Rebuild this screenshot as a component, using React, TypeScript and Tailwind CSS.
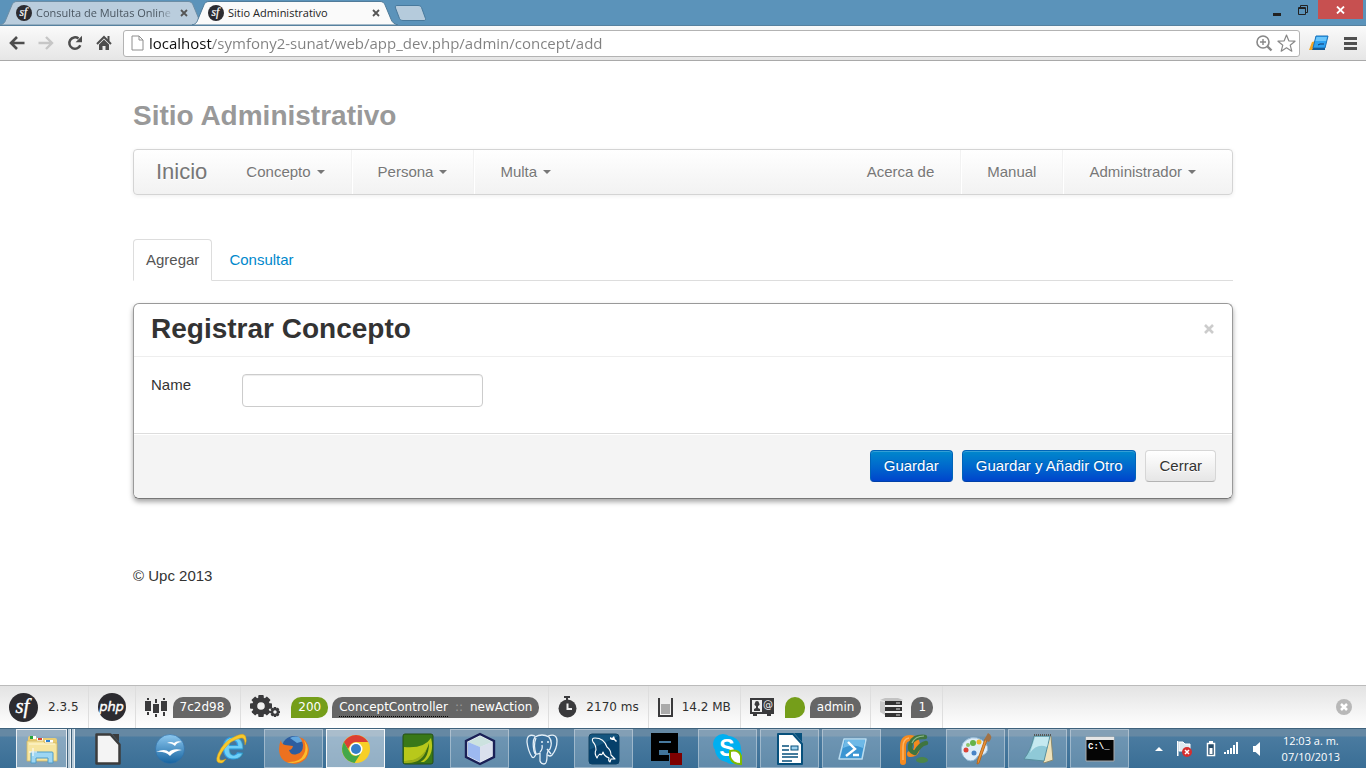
import React from "react";

function SymfonyMark({ size }: { size: number }) {
  return (
    <svg width={size} height={size} viewBox="0 0 28 28" aria-hidden="true" className="shrink-0">
      <circle cx="14" cy="14" r="14" fill="#2c2b30" />
      <text x="13" y="19" textAnchor="middle" fontFamily="Liberation Serif, serif" fontStyle="italic" fontSize="20" fill="#fff" stroke="#fff" strokeWidth=".4">sf</text>
    </svg>
  );
}

function TabShape({ fill, stroke }: { fill: string; stroke: string }) {
  return (
    <svg viewBox="0 0 206 25" preserveAspectRatio="none" className="absolute inset-0 h-full w-full" aria-hidden="true">
      <path d="M0 25 C4 24 5 22 6 19 L12 4 C13 2 14 .5 17 .5 L188 .5 C191 .5 192 2 193 4 L199 19 C200 22 202 24 206 25 Z" fill={fill} stroke={stroke} />
    </svg>
  );
}

function BrowserTab({ title, active }: { title: string; active?: boolean }) {
  return (
    <div className={active ? "relative z-10 -ml-[14px] flex h-6 w-[206px] items-center px-4" : "relative flex h-6 w-[206px] items-center px-4"}>
      {active ? <TabShape fill="#fafafa" stroke="#4d7896" /> : <TabShape fill="#bacddd" stroke="#6b8ba3" />}
      <div className="relative flex min-w-0 flex-1 items-center">
        <SymfonyMark size={16} />
        <span className={active ? "ml-1 flex-1 overflow-hidden text-[11px] leading-4 whitespace-nowrap text-[#222]" : "ml-1 flex-1 overflow-hidden text-[11px] leading-4 whitespace-nowrap text-[#4a5661] [mask-image:linear-gradient(90deg,#000_88%,transparent)]"}>{title}</span>
        <button type="button" aria-label={"Cerrar pestaña " + title} className="ml-1 flex size-3 items-center justify-center">
          <svg width="8" height="8" viewBox="0 0 8 8"><path d="M1 1l6 6M7 1l-6 6" stroke="#555" strokeWidth="1.8" /></svg>
        </button>
      </div>
    </div>
  );
}

function TitleBar() {
  return (
    <div className="flex h-[25px] items-end justify-between bg-[#5b93ba]">
      <div className="flex items-end">
        <BrowserTab title="Consulta de Multas Online" />
        <BrowserTab title="Sitio Administrativo" active />
        <button type="button" aria-label="Nueva pestaña" className="mb-[4px] -ml-1">
          <svg width="32" height="16" viewBox="0 0 32 16">
            <path d="M3 .5h21c2 0 3 1 3.500 2l4 11c.4 1-.2 2-1.500 2H9c-2 0-3-1-3.500-2L1.500 3C1 1.500 1.500.5 3 .5z" fill="#b5cbdc" stroke="#48799c" />
          </svg>
        </button>
      </div>
      <div className="mr-[3px] flex self-start">
        <button type="button" aria-label="Minimizar" className="flex h-[19px] w-[26px] items-center justify-center">
          <svg width="10" height="12" viewBox="0 0 10 12"><path d="M1 9h8v3H1z" fill="#222" /></svg>
        </button>
        <button type="button" aria-label="Restaurar" className="mr-[2px] flex h-[19px] w-[26px] items-center justify-center">
          <svg width="10" height="10" viewBox="0 0 10 10"><path d="M2.500 2V.5h7v7H8M.5 2.500h7v7h-7zM.5 3.500h7" fill="none" stroke="#222" /></svg>
        </button>
        <button type="button" aria-label="Cerrar ventana" className="flex h-[19px] w-[45px] items-center justify-center bg-[#c75050]">
          <svg width="9" height="8" viewBox="0 0 9 8"><path d="M1 .5l7 7M8 .5l-7 7" stroke="#fff" strokeWidth="1.8" /></svg>
        </button>
      </div>
    </div>
  );
}

function AddressBar() {
  return (
    <div className="flex h-9 items-center border-t border-b border-t-[#56819f] border-b-[#a9a9a9] bg-linear-to-b from-[#fafafa] to-[#e6e6e6] px-2">
      <div className="ml-px flex items-center gap-[13px]">
        <button type="button" aria-label="Atrás">
          <svg width="16" height="16" viewBox="0 0 16 16"><path d="M15.500 8H2.500M8 2L2 8l6 6" fill="none" stroke="#4d4d4d" strokeWidth="2.600" /></svg>
        </button>
        <button type="button" aria-label="Adelante">
          <svg width="16" height="16" viewBox="0 0 16 16"><path d="M.5 8h13M8 2l6 6-6 6" fill="none" stroke="#c6c6c6" strokeWidth="2.400" /></svg>
        </button>
        <button type="button" aria-label="Recargar">
          <svg width="16" height="16" viewBox="0 0 16 16"><path d="M13.300 10.200A5.700 5.700 0 1 1 11.500 3.500" fill="none" stroke="#4d4d4d" strokeWidth="2.500" /><path d="M15 .8v6.400H8.600z" fill="#4d4d4d" /></svg>
        </button>
        <button type="button" aria-label="Página principal">
          <svg width="16" height="16" viewBox="0 0 16 16"><path d="M1 9l7-7 7 7" fill="none" stroke="#4d4d4d" strokeWidth="2" /><path d="M11.500 1h2v5h-2zM3 9.500l5-5 5 5V15H9.500v-4h-3v4H3z" fill="#4d4d4d" /></svg>
        </button>
      </div>
      <div className="ml-[11px] flex h-[27px] flex-1 items-center gap-1 rounded-[3px] border border-[#b3b3b3] bg-white pr-[3px] pl-[7px]">
        <svg width="13" height="16" viewBox="0 0 13 16" aria-hidden="true"><path d="M1 1h7l4 4v10H1zM8 1v4h4" fill="#fff" stroke="#8e8e8e" /></svg>
        <input
          aria-label="Dirección"
          defaultValue="localhost/symfony2-sunat/web/app_dev.php/admin/concept/add"
          className="ml-px min-w-0 flex-1 bg-[linear-gradient(90deg,#111_63px,#808080_63px)] bg-clip-text text-[15px] leading-6 text-transparent outline-none"
        />
        <button type="button" aria-label="Zoom">
          <svg width="18" height="18" viewBox="0 0 18 18"><circle cx="8" cy="8" r="6" fill="none" stroke="#888" strokeWidth="1.600" /><path d="M5 8h6M8 5v6" stroke="#888" strokeWidth="1.400" /><path d="M12.500 12.500l4 4" stroke="#888" strokeWidth="2.400" /></svg>
        </button>
        <button type="button" aria-label="Marcador">
          <svg width="19" height="18" viewBox="0 0 19 18"><path d="M9.500 1l2.300 5.800 6.200.4-4.800 4 1.600 6-5.300-3.400-5.300 3.400 1.600-6-4.800-4 6.200-.4z" fill="#fff" stroke="#888" strokeWidth="1.200" strokeLinejoin="round" /></svg>
        </button>
      </div>
      <button type="button" aria-label="Extensión" className="ml-[9px]">
        <svg width="20" height="16" viewBox="0 0 20 16">
          <path d="M0 15l3-8 4-1-1 9z" fill="#f5a623" />
          <path d="M7 1h12l-3 12H4z" fill="#2ea2f2" stroke="#1871b8" />
          <path d="M7.500 2h10.500l-1 4H6.500z" fill="#6cc6fb" />
          <path d="M9 10l2-1h4" stroke="#14386a" fill="none" /><path d="M4 13h12v2H3z" fill="#155b96" />
        </svg>
      </button>
      <button type="button" aria-label="Menú" className="ml-[14px]">
        <svg width="15" height="14" viewBox="0 0 15 14"><path d="M1 2.500h13M1 7.500h13M1 12.500h13" stroke="#505050" strokeWidth="3" strokeLinecap="butt" /></svg>
      </button>
    </div>
  );
}

function Caret() {
  return <span aria-hidden="true" className="ml-[6px] border-x-4 border-t-4 border-x-transparent border-t-[#777]" />;
}

function NavItem({ label, caret, divider }: { label: string; caret?: boolean; divider?: boolean }) {
  return (
    <li className={divider ? "flex border-r border-[#f2f2f2] shadow-[1px_0_0_#fff]" : "flex"}>
      <a href="#" className="flex items-center px-[26px] [text-shadow:0_1px_0_#fff]">
        {label}
        {caret && <Caret />}
      </a>
    </li>
  );
}

function SitePage() {
  return (
    <div className="flex-1 bg-white font-['Liberation_Sans',Arial,sans-serif] text-[15px] leading-[22px] text-[#333]">
      <div className="mx-auto max-w-[1100px] pt-[33px]">
        <h1 className="text-[28px] leading-[44px] font-bold text-[#999]">Sitio Administrativo</h1>
        <nav className="mt-[11px] flex h-[46px] rounded-[4px] border border-[#d4d4d4] bg-linear-to-b from-white to-[#f2f2f2] pr-[10px] pl-[22px] text-[#777] shadow-[0_1px_4px_rgba(0,0,0,0.07)]">
          <a href="#" className="flex items-center text-[22px] [text-shadow:0_1px_0_#fff]">Inicio</a>
          <ul className="ml-[13px] flex">
            <NavItem label="Concepto" caret divider />
            <NavItem label="Persona" caret divider />
            <NavItem label="Multa" caret />
          </ul>
          <ul className="ml-auto flex">
            <NavItem label="Acerca de" divider />
            <NavItem label="Manual" divider />
            <NavItem label="Administrador" caret />
          </ul>
        </nav>

        <ul className="mt-11 flex h-[42px] gap-[2px] border-b border-[#ddd]">
          <li className="-mb-px flex">
            <a href="#" className="flex items-center rounded-t-[4px] border border-[#ddd] border-b-white bg-white px-3 text-[#555]">Agregar</a>
          </li>
          <li className="flex">
            <a href="#" className="flex items-center px-[15px] text-[#08c]">Consultar</a>
          </li>
        </ul>

        <section className="mt-[22px] rounded-[6px] border border-[#999] border-b-[#777] shadow-[0_3px_5px_rgba(0,0,0,0.35)]">
          <header className="flex h-[53px] items-center justify-between border-b border-[#eee] pr-4 pb-[3px] pl-[17px]">
            <h2 className="text-[28px] leading-[44px] font-bold">Registrar Concepto</h2>
            <button type="button" aria-label="Cerrar panel" className="flex size-[14px] items-center justify-center">
              <svg width="10" height="10" viewBox="0 0 10 10"><path d="M1 1l8 8M9 1l-8 8" stroke="#ccc" strokeWidth="2.600" /></svg>
            </button>
          </header>
          <form onSubmit={(e: React.FormEvent) => e.preventDefault()}>
            <div className="flex items-start px-[17px] pt-[17px] pb-[26px]">
              <label htmlFor="concept-name" className="w-[91px]">Name</label>
              <input id="concept-name" type="text" className="h-[33px] w-[241px] rounded-[4px] border border-[#ccc] bg-white px-[7px] shadow-[inset_0_1px_1px_rgba(0,0,0,0.075)] outline-none" />
            </div>
            <div className="flex justify-end gap-[9px] rounded-b-[6px] border-t border-[#ddd] bg-[#f4f4f4] p-4 shadow-[inset_0_1px_0_#fff]">
              <button type="submit" className="h-8 rounded-[4px] border border-[#0064b8] border-b-[#0040a8] bg-linear-to-b from-[#0088cc] to-[#0044cc] px-[13px] text-white shadow-[inset_0_1px_0_rgba(255,255,255,0.2)] [text-shadow:0_-1px_0_rgba(0,0,0,0.25)]">Guardar</button>
              <button type="submit" className="h-8 rounded-[4px] border border-[#0064b8] border-b-[#0040a8] bg-linear-to-b from-[#0088cc] to-[#0044cc] px-[13px] text-white shadow-[inset_0_1px_0_rgba(255,255,255,0.2)] [text-shadow:0_-1px_0_rgba(0,0,0,0.25)]">Guardar y Añadir Otro</button>
              <button type="button" className="h-8 rounded-[4px] border border-[#d6d6d6] border-b-[#b3b3b3] bg-linear-to-b from-white to-[#e6e6e6] px-[13px] [text-shadow:0_1px_0_#fff]">Cerrar</button>
            </div>
          </form>
        </section>
        <footer className="mt-[66px]">© Upc 2013</footer>
      </div>
    </div>
  );
}

function Cell({ children }: { children: React.ReactNode }) {
  return <div className="flex h-full items-center border-r border-[#dedede] px-[9px]">{children}</div>;
}

function Pill({ children }: { children: React.ReactNode }) {
  return <span className="flex h-[21px] items-center rounded-[10px] rounded-bl-none bg-[#666] px-[7px] text-white">{children}</span>;
}

const gearTeeth = [0, 45, 90, 135, 180, 225, 270, 315];

function Gear({ x, y, r }: { x: number; y: number; r: number }) {
  return (
    <g transform={`translate(${x} ${y})`} fill="#3a3a3c">
      {gearTeeth.map((a) => (
        <rect key={a} x={-r * 0.25} y={-r} width={r * 0.5} height={r * 0.5} rx={r * 0.08} transform={`rotate(${a})`} />
      ))}
      <circle r={r * 0.57} fill="none" stroke="#3a3a3c" strokeWidth={r * 0.45} />
    </g>
  );
}

function DebugToolbar() {
  return (
    <div className="flex h-[43px] items-center border-t border-[#bbb] bg-linear-to-b from-[#e3e3e3] to-white font-['DejaVu_Sans',Verdana,sans-serif] text-[12px] leading-[21px] text-[#2f2f2f]">
      <Cell>
        <SymfonyMark size={29} />
        <span className="ml-[10px]">2.3.5</span>
      </Cell>
      <Cell>
        <svg width="28" height="28" viewBox="0 0 28 28" aria-hidden="true"><circle cx="14" cy="14" r="14" fill="#2c2b30" /><text x="13.500" y="18" textAnchor="middle" fontFamily="DejaVu Sans, sans-serif" fontStyle="italic" fontSize="13" stroke="#fff" strokeWidth=".4" fill="#fff">php</text></svg>
      </Cell>
      <Cell>
        <svg width="23" height="20" viewBox="0 0 23 20" className="mr-[5px]" aria-hidden="true"><path d="M0 4h6v10H0zM8 7h6v9H8zM16 4h6v10h-6zM2 1h2v2H2zM2 15h2v3H2zM10 2h2v4h-2zM10 17h2v3h-2zM18 1h2v2h-2zM18 15h2v4h-2z" fill="#3a3a3c" /></svg>
        <Pill>7c2d98</Pill>
      </Cell>
      <Cell>
        <svg width="31" height="24" viewBox="0 0 31 24" className="mr-[10px]" aria-hidden="true"><Gear x={11} y={11} r={11} /><Gear x={25} y={17} r={5} /></svg>
        <span className="mr-1 flex h-[21px] items-center rounded-[10px] rounded-bl-none bg-[#759e1a] px-[7px] text-white">200</span>
        <Pill>
          <abbr title="ConceptController" className="h-[19px] border-b border-dotted border-black leading-[19px] no-underline">ConceptController</abbr>
          <span className="mx-[7px] text-[#9b9b9b]">::</span>
          newAction
        </Pill>
      </Cell>
      <Cell>
        <svg width="19" height="22" viewBox="0 0 19 22" aria-hidden="true"><circle cx="9.500" cy="12.500" r="9" fill="#3a3a3c" /><path d="M6 0h6v2H6zM8 2h2v2H8z" fill="#3a3a3c" /><path d="M9.500 7.500v5.500h4.500" fill="none" stroke="#eee" strokeWidth="2" /></svg>
        <span className="ml-[9px]">2170 ms</span>
      </Cell>
      <Cell>
        <svg width="15" height="19" viewBox="0 0 15 19" aria-hidden="true"><path d="M3 6h9v10H3z" fill="#aaa" /><path d="M1 0v18h13V0" fill="none" stroke="#3a3a3c" strokeWidth="2" /></svg>
        <span className="ml-[9px]">14.2 MB</span>
      </Cell>
      <Cell>
        <svg width="24" height="20" viewBox="0 0 24 20" className="mr-[11px]" aria-hidden="true">
          <path d="M0 1h24v16H0zM3 17h4v2H3zM17 17h4v2h-4z" fill="#3a3a3c" />
          <path d="M2 3h10v12H2z" fill="#eee" />
          <path d="M4 14v-2l2-1V9a2 2 0 0 1-1-3 2 2 0 0 1 4 0 2 2 0 0 1-1 3v2l2 1v2z" fill="#3a3a3c" />
          <text x="18" y="11" textAnchor="middle" fontSize="10" fill="#eee">@</text>
          <path d="M14 14h8" stroke="#3a3a3c" />
        </svg>
        <span aria-hidden="true" className="mr-[5px] h-[21px] w-5 rounded-[10px] rounded-bl-none bg-[#759e1a]" />
        <Pill>admin</Pill>
      </Cell>
      <Cell>
        <svg width="23" height="19" viewBox="0 0 23 19" className="mr-2" aria-hidden="true">
          <path d="M0 2l5-2 13 0 5 2-3 1H5zM0 8l5-1v2zM0 14l5-1v2z" fill="#c3c3c3" /><path d="M0 3l5 1v13l-5-3z" fill="#c8c8c8" />
          <path d="M5 3h17v4H5zM5 9h17v4H5zM5 15h17v4H5z" fill="#333" /><path d="M16 5h4M16 11h4M16 17h4" stroke="#ddd" />
        </svg>
        <Pill>1</Pill>
      </Cell>
      <button type="button" aria-label="Cerrar barra de depuración" className="mr-[14px] ml-auto">
        <svg width="16" height="16" viewBox="0 0 16 16"><circle cx="8" cy="8" r="8" fill="#b8b8b8" /><path d="M5 5l6 6M11 5l-6 6" stroke="#fff" strokeWidth="2.500" /></svg>
      </button>
    </div>
  );
}

const icons: Record<string, React.ReactNode> = {
  files: (
    <>
      <path d="M2 5q0-2 2-2h5l2 2h18q2 0 2 2v20H2z" fill="#e9cd74" />
      <path d="M4 3h6v3H4zM11 5h6v3h-6zM19 7h8v3h-8z" fill="#fff" /><path d="M4 3h3v3H4z" fill="#25a53b" /><path d="M12 5h4v2h-4z" fill="#d8432f" /><path d="M20 7h4v2h-4z" fill="#2d80d0" />
      <path d="M1 8h16l2 2h12v18H1z" fill="#f6e5a0" stroke="#d3b65d" strokeWidth=".8" /><path d="M3 11h26" stroke="#fff8d5" />
      <path d="M5 30V20q0-1 1-1h20q1 0 1 1v10h-5v-5H10v5z" fill="#9dd6f3" stroke="#4e9cc8" /><path d="M3 19h8M7 15v8" stroke="#fff" />
    </>
  ),
  office: (
    <><path d="M4.500 1.500h14l9 10v19h-23z" fill="#f4f4f4" stroke="#3c3c3c" strokeWidth="2.500" strokeLinejoin="round" /><path d="M20 1h7v8z" fill="#3c3c3c" /></>
  ),
  ooo: (
    <><circle cx="16" cy="16" r="14.500" fill="url(#ball)" stroke="#2f6fa8" strokeWidth=".6" /><path d="M13 10q4-2 7 0 3-3 8-1-5 0-7 4-3-3-8-3zM2 19q9-4 13 0 4-4 13-2-8 1-12 6-5-5-14-4z" fill="#fff" /></>
  ),
  ie: (
    <>
      <text x="17" y="26" textAnchor="middle" fontFamily="Liberation Sans, sans-serif" fontWeight="bold" fontSize="40" fill="#6fd0f8" stroke="#2a9bd8" strokeWidth=".8">e</text>
      <path d="M6 30Q-2 31 2 21 7 9 18 4 29-2 30 5q1 3-1 7 0-8-4-7-10 2-16 10-7 9-5 12 2 1 6-1-2 3-4 4z" fill="#f8c92c" stroke="#d99a12" strokeWidth=".5" />
    </>
  ),
  firefox: (
    <>
      <circle cx="16" cy="15" r="12" fill="#2d5d9f" /><path d="M12 5q8-4 14 3l-7 2z" fill="#63a7dd" />
      <path d="M3 7q0 4 4 5l8 1q-1 4-4 4 2 6 8 4 6-1 6-9-1-6-4-8 9 2 10 13-1 12-14 14Q1 30 1 16q0-5 2-9z" fill="#ed711f" />
      <path d="M26 7q7 9 1 18Q19 32 9 29q13 1 17-8 3-6 0-14z" fill="#fbbd2e" />
    </>
  ),
  chrome: (
    <>
      <circle cx="16" cy="16" r="14" fill="#f7cf27" />
      <path d="M3.900 9A14 14 0 0 1 28.100 9H16a7 7 0 0 0-6.100 3.500L8 16z" fill="#dc3f33" />
      <path d="M3.900 9A14 14 0 0 0 14.500 29.900L21 20l-5 3a7 7 0 0 1-6.100-3.500z" fill="#43a749" />
      <circle cx="16" cy="16" r="6.500" fill="#fff" /><circle cx="16" cy="16" r="5" fill="#357fc9" />
    </>
  ),
  leaf: (
    <><rect x="1" y="1" width="30" height="30" rx="2" fill="#397819" stroke="#254f15" /><path d="M2 14q20 2 27-9 4 16-7 24H2z" fill="#b8c81b" /><path d="M2 28q20 1 25-18 0 19-15 21H2z" fill="#386c12" /><path d="M2 28q16 0 23-13-4 15-19 15H2z" fill="#9aae1a" /></>
  ),
  cube: (
    <><path d="M16 1l14 7v16l-14 7-14-7V8z" fill="#e7edf4" stroke="#1a2056" strokeWidth="2.400" /><path d="M4 9l12-6 12 6-12 5z" fill="#cce2df" /><path d="M4 9l12 5v15L4 23z" fill="#9db9f0" /><path d="M16 14l12-5v14l-12 6z" fill="#dae0ed" /></>
  ),
  elephant: (
    <g fill="#3a709c" stroke="#e4eff7" strokeWidth="1.300" strokeLinejoin="round">
      <path d="M9 3Q1 0 1 9q1 9 5 15 2 2 4-3M22 3q9-3 9 5 0 8-5 14-2 2-4 0M9 4q7-4 14 0 4 5 1 12-3 2-3 7 0 8-3 8-3 0-4-3v-8q-5 3-6-2Q6 8 9 4z" /><path d="M10 5q-3 7 0 16M15 9h2M21 9h2M21 16l4 5M14 19q3-3 2-7" fill="none" />
    </g>
  ),
  dolphin: (
    <><rect x="1" y="1" width="30" height="30" rx="3" fill="#14557f" stroke="#13415f" /><path d="M1 17l30-14V29q0 2-2 2H3q-2 0-2-2z" fill="#06406a" /><path d="M9 25q-3-5-1-8 0-5-3-8-2-4 2-4 9 0 12 9 4 3 4 8l4 4-4 0-1 3q-2-1-1-4-5-2-6-6-1 4-3 2-2 1-3 4z" fill="none" stroke="#fff" strokeWidth="1.100" strokeLinejoin="round" /><path d="M22 4l2 1 1-1 1-1 1 3 2 2-1 1-2-2-2 0-2-1z" fill="#fff" /></>
  ),
  block: (
    <><path d="M1 0h27v20H18v-3H9v5h10v6H1zM9 8v2h12V8z" fill="#000" fillRule="evenodd" /><rect x="20" y="20" width="12" height="12" fill="#7e0000" /></>
  ),
  skype: (
    <><circle cx="11" cy="11" r="10" fill="#00aff0" /><circle cx="20" cy="21" r="10" fill="#00aff0" /><circle cx="16" cy="16" r="13" fill="#00aff0" /><text x="15" y="23" textAnchor="middle" fontFamily="Liberation Sans, sans-serif" fontWeight="bold" fontSize="23" fill="#fff">S</text><path d="M18 18q9-2 11 5v8q-9 0-11-7z" fill="#fff" stroke="#7fba00" strokeWidth="2" /></>
  ),
  writer: (
    <><path d="M4 1h15l9 10v20H4z" fill="#fff" stroke="#07507c" strokeWidth="2" strokeLinejoin="round" /><path d="M20 0h8v9z" fill="#07507c" /><path d="M8 13h7M8 17h7M8 21h16M8 24h16M8 28h10" stroke="#07507c" strokeWidth="1.500" /><rect x="17" y="13" width="7" height="4" fill="#9ed1ee" stroke="#07507c" /></>
  ),
  shell: (
    <><path d="M8 6h22l-4 20H3z" fill="#3b95d2" stroke="#b9dcf0" strokeWidth="1.500" strokeLinejoin="round" /><path d="M9 7h20l-2 8Q17 10 7 15z" fill="#6eb9e7" /><path d="M12 9l7 7-9 7M17 22h6" fill="none" stroke="#fff" strokeWidth="2.400" /></>
  ),
  snake: (
    <>
      <path d="M5 29V14Q5 5 12 5 19 5 19 13 19 21 12 21" fill="none" stroke="#f58a1f" strokeWidth="6" strokeLinecap="round" />
      <path d="M5 27V14Q5 6 11 5" fill="none" stroke="#fbb565" strokeWidth="1.500" />
      <path d="M27 4Q16 3 13 10 10 18 17 20 22 11 28 10" fill="none" stroke="#3f7440" strokeWidth="4.500" strokeLinecap="round" strokeLinejoin="round" />
      <path d="M26 3Q17 3 14 10" fill="none" stroke="#8db98a" strokeWidth="1.200" />
      <ellipse cx="24" cy="27" rx="6" ry="3" fill="#4b854a" />
    </>
  ),
  paint: (
    <><path d="M3 10Q11 1 22 7q9 7 4 13-4 4-8 3-4 7-11 4Q-2 20 3 10z" fill="#dfeef9" stroke="#93b8d4" /><circle cx="13" cy="10" r="3" fill="#65b34a" /><circle cx="6" cy="17" r="2.500" fill="#db4338" /><circle cx="19" cy="9" r="2.500" fill="#efb62d" /><circle cx="8" cy="12" r="2" fill="#8cc46c" /><circle cx="14" cy="20" r="2.500" fill="#4984c6" /><path d="M27 7L19 30l-2 1 1-5 7-20z" fill="#ee9437" stroke="#b66b20" /><path d="M24 7l4-7q6 3 1 9z" fill="#a27246" /></>
  ),
  notes: (
    <><path d="M12 3h17l2 24-9 3z" fill="#eee2bb" stroke="#8a8a70" /><path d="M12 3h16l-6 25-20-2q7-9 10-23z" fill="#8fc9d7" stroke="#578e9d" /><path d="M13 4h14l-2 10Q15 10 8 20z" fill="#c5e9f0" /><path d="M12 2h17" stroke="#555" strokeWidth="2" strokeDasharray="1 1" /></>
  ),
  cmd: (
    <><path d="M2 4h28v24H2z" fill="#050505" stroke="#aaa" /><path d="M2 4h28v3H2z" fill="#e5e5e5" /><text x="4" y="16" fontFamily="Liberation Mono, monospace" fontWeight="bold" fontSize="9" fill="#fff">C:\_</text></>
  ),
};

const apps = [
  { id: "files", label: "Explorador de archivos", state: "stack" },
  { id: "office", label: "LibreOffice", state: "idle" },
  { id: "ooo", label: "OpenOffice", state: "idle" },
  { id: "ie", label: "Internet Explorer", state: "idle" },
  { id: "firefox", label: "Firefox", state: "open" },
  { id: "chrome", label: "Chrome", state: "active" },
  { id: "leaf", label: "Editor", state: "idle" },
  { id: "cube", label: "NetBeans", state: "open" },
  { id: "elephant", label: "pgAdmin", state: "idle" },
  { id: "dolphin", label: "MySQL Workbench", state: "open" },
  { id: "block", label: "Terminal E", state: "idle" },
  { id: "skype", label: "Skype", state: "open" },
  { id: "writer", label: "Writer", state: "open" },
  { id: "shell", label: "PowerShell", state: "open" },
  { id: "snake", label: "Python", state: "idle" },
  { id: "paint", label: "Paint", state: "open" },
  { id: "notes", label: "Bloc de notas", state: "open" },
  { id: "cmd", label: "Símbolo del sistema", state: "open" },
];

const stateClasses: Record<string, string> = {
  idle: "w-[59px] border-transparent",
  open: "w-[59px] border-white/35 bg-white/20",
  active: "w-[59px] border-white/90 bg-white/45",
  stack: "mr-2 w-[51px] border-white/80 bg-white/35 shadow-[1px_0_0_#3f627c,3px_0_0_#b9cbd8,4px_0_0_#e8eff4,5px_0_0_#3f627c,7px_0_0_#b9cbd8,8px_0_0_#e8eff4]",
};

function Taskbar() {
  return (
    <div className="flex h-10 items-center justify-between border-t border-[#3f627c] bg-[linear-gradient(180deg,#6588a3_0,#6588a3_7px,#4a7ba0_8px,#3a6e95_100%)]">
      <svg width="0" height="0" className="absolute" aria-hidden="true"><defs><linearGradient id="ball" x2="0" y2="1"><stop stopColor="#8dc8f0" /><stop offset="1" stopColor="#16639f" /></linearGradient></defs></svg>
      <div className="flex gap-[3px] pl-4">
        {apps.map((app) => (
          <button key={app.id} type="button" aria-label={app.label} className={"flex h-[39px] items-center justify-center border " + stateClasses[app.state]}>
            <svg width="32" height="32" viewBox="0 0 32 32" className="overflow-visible">{icons[app.id]}</svg>
          </button>
        ))}
      </div>
      <div className="flex items-center pr-[26px] text-white">
        <svg width="8" height="6" viewBox="0 0 8 6" className="mr-[13px]" aria-hidden="true"><path d="M0 5l4-4 4 4z" fill="#fff" /></svg>
        <svg width="17" height="18" viewBox="0 0 17 18" className="mr-[13px]" aria-hidden="true"><path d="M1 1h1.500v15H1z" fill="#fff" /><path d="M3 2h4l2 2h5v7H3z" fill="#dfe9f0" stroke="#fff" /><circle cx="11" cy="12" r="5" fill="#d62f2f" /><path d="M9 10l4 4M13 10l-4 4" stroke="#fff" strokeWidth="1.500" /></svg>
        <svg width="10" height="16" viewBox="0 0 10 16" className="mr-2" aria-hidden="true"><path d="M3 0h4v2H3z" fill="#fff" /><path d="M1.500 2.500h7v12h-7z" fill="#274d6a" stroke="#fff" strokeWidth="1.500" /><path d="M3.500 7h3v6h-3z" fill="#fff" /></svg>
        <svg width="16" height="13" viewBox="0 0 16 13" className="mr-[13px]" aria-hidden="true"><path d="M0 10h2v2H0zM3 8h2v4H3zM6 6h2v6H6zM9 3h2v9H9zM12 0h2v12h-2z" fill="#fff" /></svg>
        <svg width="8" height="14" viewBox="0 0 8 14" className="mr-[21px]" aria-hidden="true"><path d="M0 4h2.500L7 0v14L2.500 10H0z" fill="#fff" /></svg>
        <div className="text-center text-[11px] leading-4">
          <div>12:03 a. m.</div>
          <div>07/10/2013</div>
        </div>
      </div>
    </div>
  );
}

export default function App() {
  return (
    <div className="flex min-h-screen flex-col overflow-hidden font-['Open_Sans','Noto_Sans',sans-serif]">
      <TitleBar />
      <AddressBar />
      <SitePage />
      <DebugToolbar />
      <Taskbar />
    </div>
  );
}
